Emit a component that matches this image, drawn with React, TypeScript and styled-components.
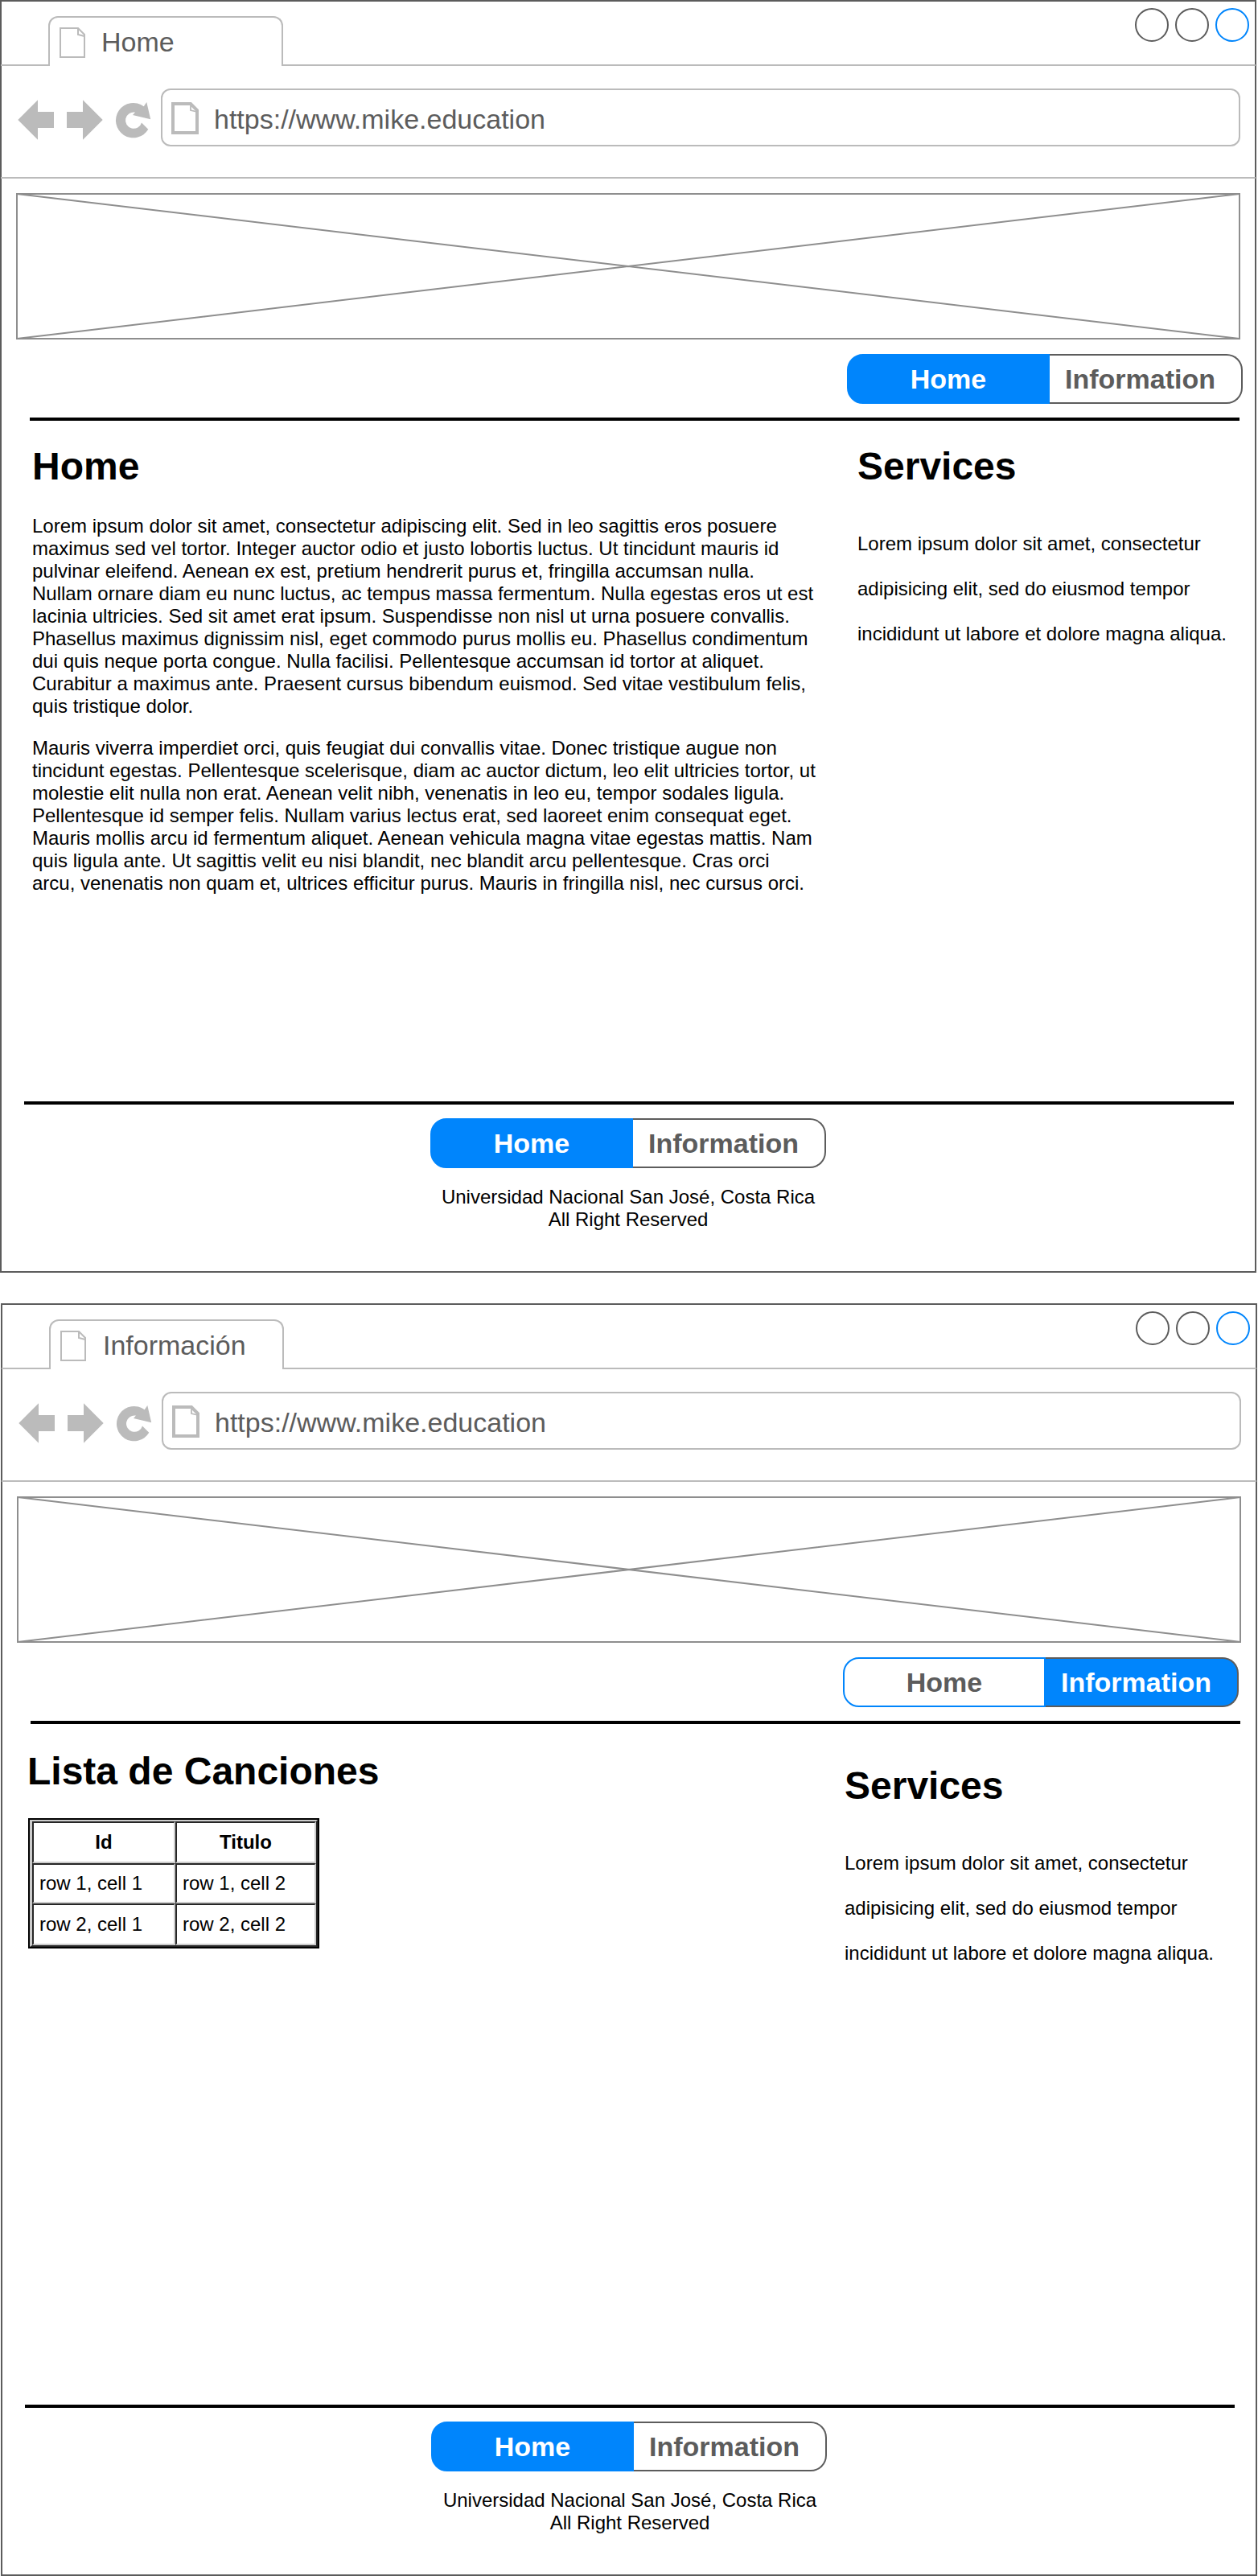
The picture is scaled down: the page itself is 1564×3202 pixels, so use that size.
import React from "react";
import styled, { createGlobalStyle } from "styled-components";

const INK = "#5c5c5c";
const SOFT = "#bbbbbb";
const BLUE = "#0085fc";

const GlobalStyle = createGlobalStyle`
  *, *::before, *::after { box-sizing: border-box; }
  body {
    margin: 0;
    background: #fff;
    color: #000;
    font-family: "Liberation Sans", Arial, Helvetica, sans-serif;
    font-size: 24px;
    line-height: 28px;
  }
  h1, h2, p { margin: 0; }
  svg { display: block; flex: none; }
`;

const Board = styled.div`
  width: 1564px;
  display: flex;
  flex-direction: column;
  gap: 38px;
`;

const Frame = styled.section<{ $shift: number }>`
  width: 1562px;
  height: 1582px;
  margin-left: ${(p) => p.$shift}px;
  border: 2px solid ${INK};
  display: flex;
  flex-direction: column;
`;

const TabStrip = styled.div`
  height: 80px;
  margin: 0 -1px;
  display: flex;
  align-items: flex-end;
  flex: none;
`;

const StripLead = styled.div`
  width: 59px;
  border-bottom: 2px solid ${SOFT};
`;

const Tab = styled.div<{ $gap: number }>`
  width: 292px;
  height: 62px;
  padding-left: 12px;
  border: 2px solid ${SOFT};
  border-bottom: none;
  border-radius: 12px 12px 0 0;
  display: flex;
  align-items: center;
  gap: ${(p) => p.$gap}px;
  color: ${INK};
  font-size: 34px;
  line-height: 40px;

  svg { margin-top: 2px; }
`;

const StripRest = styled.div`
  flex: 1;
  align-self: stretch;
  padding: 8px 8px 0 0;
  border-bottom: 2px solid ${SOFT};
  display: flex;
  justify-content: flex-end;
  gap: 8px;
`;

const WindowButton = styled.span<{ $color: string }>`
  width: 42px;
  height: 42px;
  border: 2px solid ${(p) => p.$color};
  border-radius: 50%;
`;

const Toolbar = styled.div`
  height: 140px;
  margin: 0 -1px;
  padding: 28px 19px 0 21px;
  border-bottom: 2px solid ${SOFT};
  display: flex;
  flex: none;
`;

const BrowserButtons = styled.div`
  width: 178px;
  height: 72px;
  flex: none;
`;

const AddressBar = styled.div`
  flex: 1;
  height: 72px;
  padding: 3px 0 0 11px;
  border: 2px solid ${SOFT};
  border-radius: 12px;
  display: flex;
  align-items: center;
  gap: 19px;
  color: ${INK};
  font-size: 34px;
  line-height: 40px;

  svg { margin-top: -1px; }
`;

const Banner = styled.svg`
  width: 1522px;
  height: 182px;
  margin: 18px 0 0 18px;
`;

const NavRow = styled.div<{ $right: number }>`
  padding: 18px ${(p) => p.$right}px 17px 0;
  display: flex;
  justify-content: flex-end;
`;

const Segments = styled.nav`
  width: 492px;
  height: 62px;
  display: flex;
  font-size: 34px;
  font-weight: bold;
`;

const Segment = styled.a<{ $active: boolean }>`
  display: flex;
  align-items: center;
  justify-content: center;
  background: ${(p) => (p.$active ? BLUE : "#fff")};
  color: ${(p) => (p.$active ? "#fff" : INK)};
`;

const FirstSegment = styled(Segment)`
  width: 252px;
  border: 2px solid ${BLUE};
  border-radius: 20px 0 0 20px;
`;

const LastSegment = styled(Segment)`
  width: 240px;
  padding-right: 13px;
  border: 2px solid ${INK};
  border-left: none;
  border-radius: 0 20px 20px 0;
`;

const Rule = styled.hr<{ $left: number }>`
  width: 1504px;
  height: 4px;
  margin: 0 0 0 ${(p) => p.$left}px;
  border: 0;
  background: #000;
  flex: none;
`;

const Body = styled.main`
  height: 846px;
  display: flex;
  align-items: flex-start;
  flex: none;
`;

const Column = styled.div<{ $left: number; $top: number; $width: number }>`
  width: ${(p) => p.$width}px;
  padding: ${(p) => p.$top}px 0 0 ${(p) => p.$left}px;
  flex: none;
`;

const Title = styled.h1`
  font-size: 48px;
  line-height: 56px;
  font-weight: bold;
`;

const Article = styled.div`
  padding-top: 32px;
  display: flex;
  flex-direction: column;
  gap: 24px;
`;

const Lines = styled.p`
  white-space: pre;
`;

const LooseLines = styled(Lines)`
  padding-top: 40px;
  line-height: 56px;
`;

const SongsFrame = styled.div`
  width: 362px;
  height: 162px;
  margin: 30px 0 0 1px;
  border: 2px solid #000;
`;

const Songs = styled.table`
  width: 358px;
  height: 158px;
  border: 2px solid;
  border-color: #cccccc #262626 #262626 #cccccc;
  border-left-width: 3px;
  border-spacing: 0;
  border-collapse: separate;
  table-layout: fixed;
`;

const Cell = styled.td<{ $height: number; $width: number }>`
  width: ${(p) => p.$width}px;
  height: ${(p) => p.$height}px;
  padding: 0 0 0 7px;
  border: 2px solid;
  border-color: #262626 #cccccc #cccccc #262626;
`;

const HeadCell = styled(Cell)`
  padding: 0;
  text-align: center;
  font-weight: bold;
`;

const Footer = styled.footer<{ $shift: number }>`
  padding: 17px 0 0 533px;
  width: 1025px;

  p {
    padding-top: 22px;
    text-align: center;
    margin-left: ${(p) => p.$shift}px;
    margin-right: ${(p) => -p.$shift}px;
  }
`;

const TabPage = () => (
  <svg width="32" height="38" viewBox="0 0 32 38" fill="none" stroke={SOFT} strokeWidth="2">
    <path d="M1 1H23L31 9V37H1Z" />
    <path d="M23 1V9L31 11" />
  </svg>
);

const AddressPage = () => (
  <svg width="34" height="40" viewBox="0 0 34 40" fill="none" stroke={SOFT}>
    <path d="M2 2H24L32 10V38H2Z" strokeWidth="4" />
    <path d="M24 3V10L32 12" strokeWidth="1.8" />
  </svg>
);

const NavIcons = () => (
  <svg width="178" height="72" viewBox="22 110 178 72" fill={SOFT}>
    <path d="M22.3 149L47 124.3V139H67V159H47V173.7Z" />
    <path d="M127.7 149L103 124.3V139H83V159H103V173.7Z" />
    <path d="M184.3 160.8A21.7 21.7 0 1 1 178.7 132.3L182.3 127L187.2 148.3L165 143L168 139.6A10.2 10.2 0 1 0 176 152.4Z" />
  </svg>
);

const Placeholder = () => (
  <Banner viewBox="0 0 1522 182" fill="none" stroke="#8e8e8e" strokeWidth="2">
    <path d="M1 1H1521V181H1Z" />
    <path d="M1 1L1521 181M1 181L1521 1" />
  </Banner>
);

type Page = "home" | "information";

const Menu = ({ active }: { active: Page }) => (
  <Segments>
    <FirstSegment $active={active === "home"}>Home</FirstSegment>
    <LastSegment $active={active === "information"}>Information</LastSegment>
  </Segments>
);

const FIRST = `Lorem ipsum dolor sit amet, consectetur adipiscing elit. Sed in leo sagittis eros posuere
maximus sed vel tortor. Integer auctor odio et justo lobortis luctus. Ut tincidunt mauris id
pulvinar eleifend. Aenean ex est, pretium hendrerit purus et, fringilla accumsan nulla.
Nullam ornare diam eu nunc luctus, ac tempus massa fermentum. Nulla egestas eros ut est
lacinia ultricies. Sed sit amet erat ipsum. Suspendisse non nisl ut urna posuere convallis.
Phasellus maximus dignissim nisl, eget commodo purus mollis eu. Phasellus condimentum
dui quis neque porta congue. Nulla facilisi. Pellentesque accumsan id tortor at aliquet.
Curabitur a maximus ante. Praesent cursus bibendum euismod. Sed vitae vestibulum felis,
quis tristique dolor.`;

const SECOND = `Mauris viverra imperdiet orci, quis feugiat dui convallis vitae. Donec tristique augue non
tincidunt egestas. Pellentesque scelerisque, diam ac auctor dictum, leo elit ultricies tortor, ut
molestie elit nulla non erat. Aenean velit nibh, venenatis in leo eu, tempor sodales ligula.
Pellentesque id semper felis. Nullam varius lectus erat, sed laoreet enim consequat eget.
Mauris mollis arcu id fermentum aliquet. Aenean vehicula magna vitae egestas mattis. Nam
quis ligula ante. Ut sagittis velit eu nisi blandit, nec blandit arcu pellentesque. Cras orci
arcu, venenatis non quam et, ultrices efficitur purus. Mauris in fringilla nisl, nec cursus orci.`;

const SERVICES = `Lorem ipsum dolor sit amet, consectetur
adipisicing elit, sed do eiusmod tempor
incididunt ut labore et dolore magna aliqua.`;

const Services = ({ left, top }: { left: number; top: number }) => (
  <Column $left={left} $top={top} $width={500}>
    <Title as="h2">Services</Title>
    <LooseLines>{SERVICES}</LooseLines>
  </Column>
);

interface WindowProps {
  tab: string;
  tabGap: number;
  active: Page;
  shift: number;
  navRight: number;
  footShift: number;
  children: React.ReactNode;
}

const BrowserWindow = ({ tab, tabGap, active, shift, navRight, footShift, children }: WindowProps) => (
  <Frame $shift={shift}>
    <TabStrip>
      <StripLead />
      <Tab $gap={tabGap}>
        <TabPage />
        <span>{tab}</span>
      </Tab>
      <StripRest>
        <WindowButton $color={INK} />
        <WindowButton $color={INK} />
        <WindowButton $color={BLUE} />
      </StripRest>
    </TabStrip>
    <Toolbar>
      <BrowserButtons>
        <NavIcons />
      </BrowserButtons>
      <AddressBar>
        <AddressPage />
        <span>https://www.mike.education</span>
      </AddressBar>
    </Toolbar>
    <Placeholder />
    <NavRow $right={navRight}>
      <Menu active={active} />
    </NavRow>
    <Rule $left={35} />
    <Body>{children}</Body>
    <Rule $left={28} />
    <Footer $shift={footShift}>
      <Menu active="home" />
      <p>
        Universidad Nacional San José, Costa Rica
        <br />
        All Right Reserved
      </p>
    </Footer>
  </Frame>
);

export default function App() {
  return (
    <>
      <GlobalStyle />
      <Board>
        <BrowserWindow tab="Home" tabGap={20} active="home" shift={0} navRight={15} footShift={0}>
          <Column $left={38} $top={29} $width={1018}>
            <Title>Home</Title>
            <Article>
              <Lines>{FIRST}</Lines>
              <Lines>{SECOND}</Lines>
            </Article>
          </Column>
          <Services left={46} top={29} />
        </BrowserWindow>
        <BrowserWindow tab="Información" tabGap={21} active="information" shift={1} navRight={21} footShift={1}>
          <Column $left={31} $top={31} $width={1000}>
            <Title>Lista de Canciones</Title>
            <SongsFrame>
              <Songs>
                <tbody>
                  <tr>
                    <HeadCell as="th" $width={178} $height={52}>Id</HeadCell>
                    <HeadCell as="th" $width={175} $height={52}>Titulo</HeadCell>
                  </tr>
                  <tr>
                    <Cell $width={178} $height={50}>row 1, cell 1</Cell>
                    <Cell $width={175} $height={50}>row 1, cell 2</Cell>
                  </tr>
                  <tr>
                    <Cell $width={178} $height={52}>row 2, cell 1</Cell>
                    <Cell $width={175} $height={52}>row 2, cell 2</Cell>
                  </tr>
                </tbody>
              </Songs>
            </SongsFrame>
          </Column>
          <Services left={47} top={49} />
        </BrowserWindow>
      </Board>
    </>
  );
}
